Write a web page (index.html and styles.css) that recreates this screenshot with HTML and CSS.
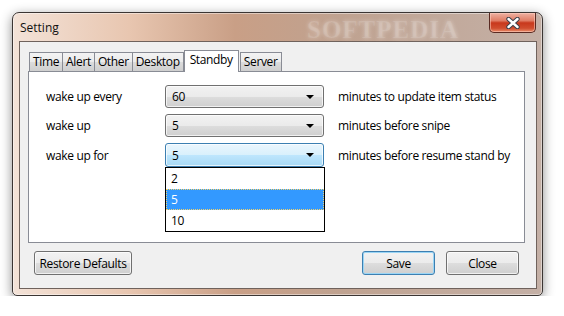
FILE: index.html
```html
<!DOCTYPE html>
<html lang="en">
<head>
    <meta charset="UTF-8">
    <title>Setting</title>
    <link rel="stylesheet" href="styles.css">
</head>
<body>
    <div class="window">
        <div class="titlebar">
            <span class="title">Setting</span>
            <span class="watermark">SOFTPEDIA</span>
            <div class="close-btn">
                <svg width="18" height="12" viewBox="0 0 18 12">
                    <path d="M4.5 2 L13.5 10 M13.5 2 L4.5 10" stroke="#3a3f4a" stroke-width="4.4" stroke-linecap="round"/>
                    <path d="M4.5 2 L13.5 10 M13.5 2 L4.5 10" stroke="#ffffff" stroke-width="2.4" stroke-linecap="round"/>
                </svg>
            </div>
        </div>

        <div class="client">
            <div class="tabs">
                <div class="tab">Time</div>
                <div class="tab">Alert</div>
                <div class="tab">Other</div>
                <div class="tab">Desktop</div>
                <div class="tab active">Standby</div>
                <div class="tab">Server</div>
            </div>

            <div class="panel">
                <div class="row">
                    <label>wake up every</label>
                    <div class="combo"><span>60</span><i class="arrow"></i></div>
                    <span class="hint">minutes to update item status</span>
                </div>
                <div class="row">
                    <label>wake up</label>
                    <div class="combo"><span>5</span><i class="arrow"></i></div>
                    <span class="hint">minutes before snipe</span>
                </div>
                <div class="row">
                    <label>wake up for</label>
                    <div class="combo-wrap">
                        <div class="combo open"><span>5</span><i class="arrow"></i></div>
                        <ul class="dropdown">
                            <li>2</li>
                            <li class="selected">5</li>
                            <li>10</li>
                        </ul>
                    </div>
                    <span class="hint">minutes before resume stand by</span>
                </div>
            </div>

            <div class="buttons">
                <button class="btn wide">Restore Defaults</button>
                <div class="spacer"></div>
                <button class="btn default">Save</button>
                <button class="btn">Close</button>
            </div>
        </div>
    </div>
</body>
</html>
```

FILE: styles.css
```css
/* Reset */
* {
    box-sizing: border-box;
    margin: 0;
    padding: 0;
}

body {
    font-family: "Open Sans", "Noto Sans", sans-serif;
    font-size: 11px;
    letter-spacing: -0.35px;
    color: #000;
    background: #ffffff;
    padding: 12px 0 0 12px;
}

/* Aero window frame */
.window {
    width: 531px;
    height: 284px;
    border: 1px solid #3b3533;
    border-radius: 7px 7px 5px 5px;
    background: linear-gradient(90deg, #f3e2d7 0%, #e8c6b0 22%, #c99f86 42%, #bfa290 62%, #c4b0a6 100%);
    box-shadow: 0 3px 12px rgba(0, 0, 0, 0.45), inset 0 0 0 1px rgba(255, 255, 255, 0.45);
    display: flex;
    flex-direction: column;
    padding: 0 5px 6px 6px;
}

.titlebar {
    height: 28px;
    display: flex;
    align-items: flex-start;
    position: relative;
}

.title {
    font-size: 12px;
    letter-spacing: 0;
    margin: 6px 0 0 1px;
    color: #111;
}

.watermark {
    position: absolute;
    left: 288px;
    top: 3px;
    font-family: "Liberation Serif", serif;
    font-weight: bold;
    font-size: 25px;
    letter-spacing: 1px;
    color: rgba(255, 255, 255, 0.12);
    text-shadow: 0 0 4px rgba(255, 255, 255, 0.35);
}

.close-btn {
    margin-left: auto;
    margin-right: 1px;
    width: 47px;
    height: 20px;
    border: 1px solid #5a2a22;
    border-top: none;
    border-radius: 0 0 5px 5px;
    background: linear-gradient(#eeb1a2 0%, #e07d65 40%, #c8381c 52%, #d04d2e 80%, #e98e6c 100%);
    display: flex;
    align-items: center;
    justify-content: center;
    box-shadow: inset 0 0 0 1px rgba(255, 210, 195, 0.55);
}

/* Client area */
.client {
    flex: 1;
    background: #f0f0f0;
    border: 1px solid #6f625c;
    padding: 10px 11px 0 8px;
    display: flex;
    flex-direction: column;
}

.tabs {
    display: flex;
    height: 19px;
    align-items: flex-end;
    padding-left: 1px;
}

.tab {
    height: 19px;
    padding: 0 3px;
    border: 1px solid #898c95;
    border-bottom: none;
    margin-right: -1px;
    background: linear-gradient(#f3f3f3 0%, #ebebeb 50%, #dcdcdc 51%, #cfcfcf 100%);
    line-height: 18px;
    font-size: 12px;
}

.tab.active {
    background: #ffffff;
    padding: 0 5px;
    margin: 0 1px -1px 1px;
    position: relative;
    z-index: 1;
    height: 22px;
    line-height: 18px;
}

.panel {
    height: 172px;
    background: #ffffff;
    border: 1px solid #898c95;
    padding: 13px 0 0 17px;
    display: flex;
    flex-direction: column;
    gap: 6px;
}

.row {
    display: flex;
    align-items: center;
    height: 23px;
    font-size: 12px;
}

.row:last-child {
    height: 24px;
}

.row label {
    width: 119px;
}

.combo-wrap {
    position: relative;
}

.combo {
    width: 159px;
    height: 23px;
    border: 1px solid #707070;
    border-radius: 3px;
    background: linear-gradient(#f2f2f2 0%, #ebebeb 50%, #dddddd 51%, #cfcfcf 100%);
    display: flex;
    align-items: center;
    padding: 0 9px 0 6px;
    box-shadow: inset 0 0 0 1px rgba(255, 255, 255, 0.7);
}

.combo.open {
    height: 24px;
    border-color: #3c7fb1;
    background: linear-gradient(#eaf6fd 0%, #d9f0fc 50%, #bee6fd 51%, #a7d9f5 100%);
}

.arrow {
    margin-left: auto;
    width: 0;
    height: 0;
    border-left: 4px solid transparent;
    border-right: 4px solid transparent;
    border-top: 4px solid #000;
}

.hint {
    margin-left: 14px;
}

.dropdown {
    position: absolute;
    left: 0;
    top: 24px;
    width: 160px;
    background: #fff;
    border: 1px solid #000;
    list-style: none;
    z-index: 2;
}

.dropdown li {
    height: 21px;
    line-height: 21px;
    padding-left: 5px;
}

.dropdown li.selected {
    background: #3399ff;
    color: #fff;
    outline: 1px dotted #f5d36a;
    outline-offset: -1px;
}

/* Bottom buttons */
.buttons {
    display: flex;
    padding: 8px 6px 0 6px;
    gap: 11px;
}

.spacer {
    flex: 1;
}

.btn {
    font-family: inherit;
    font-size: 12px;
    letter-spacing: -0.35px;
    width: 73px;
    height: 24px;
    border: 1px solid #707070;
    border-radius: 3px;
    background: linear-gradient(#f2f2f2 0%, #ebebeb 50%, #dddddd 51%, #cfcfcf 100%);
    box-shadow: inset 0 0 0 1px rgba(255, 255, 255, 0.7);
    color: #000;
}

.btn.wide {
    width: 98px;
}

.btn.default {
    border-color: #3c7fb1;
    box-shadow: inset 0 0 0 1px #9ad5f5;
}
```
